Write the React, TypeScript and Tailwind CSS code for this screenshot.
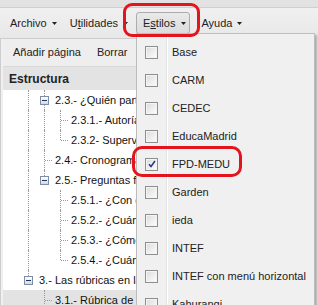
import React from 'react'

type Node = {
  text: string
  level: number
  expander?: boolean
  anc: boolean[]
  last?: boolean
  selected?: boolean
}

const tree: Node[] = [
  { text: '2.3.- ¿Quién participa?', level: 1, expander: true, anc: [true] },
  { text: '2.3.1.- Autoría', level: 2, anc: [true, true] },
  { text: '2.3.2- Supervisión', level: 2, anc: [true, true], last: true },
  { text: '2.4.- Cronograma', level: 1, anc: [true] },
  { text: '2.5.- Preguntas frecuentes', level: 1, expander: true, anc: [true], last: true },
  { text: '2.5.1.- ¿Con qué?', level: 2, anc: [true, false] },
  { text: '2.5.2.- ¿Cuánto?', level: 2, anc: [true, false] },
  { text: '2.5.3.- ¿Cómo?', level: 2, anc: [true, false] },
  { text: '2.5.4.- ¿Cuándo?', level: 2, anc: [true, false], last: true },
  { text: '3.- Las rúbricas en la evaluación', level: 0, expander: true, anc: [], last: true },
  { text: '3.1.- Rúbrica de evaluación', level: 1, anc: [false], selected: true },
]

const styles = ['Base', 'CARM', 'CEDEC', 'EducaMadrid', 'FPD-MEDU', 'Garden', 'ieda', 'INTEF', 'INTEF con menú horizontal', 'Kahurangi']

function Caret() {
  return (
    <svg width="5" height="3" viewBox="0 0 5 3" className="shrink-0">
      <path d="M0 0h5L2.5 3z" fill="#222" />
    </svg>
  )
}

function VLine({ half }: { half?: boolean }) {
  return <div className={`absolute left-[8px] top-0 border-l border-dotted border-[#9a9a9a] ${half ? 'h-[10px]' : 'bottom-0'}`} />
}

function TreeRow({ n }: { n: Node }) {
  return (
    <div className={`flex h-[20px] items-center pl-[17px] ${n.selected ? 'bg-[#e3e3e3]' : ''}`}>
      {n.anc.map((a, i) => (
        <div key={i} className="relative h-[20px] w-[16px] shrink-0">
          {a && <VLine />}
        </div>
      ))}
      <div className="relative h-[20px] w-[16px] shrink-0">
        {n.expander ? (
          <>
            <div className="absolute left-[8px] top-0 h-[6px] border-l border-dotted border-[#9a9a9a]" />
            {!n.last && <div className="absolute left-[8px] top-[14px] bottom-0 border-l border-dotted border-[#9a9a9a]" />}
            <div className="absolute left-[4px] top-[6px] flex h-[9px] w-[9px] items-center justify-center border border-[#7d8ea6] bg-gradient-to-b from-white to-[#d3d9e2]">
              <div className="h-[1px] w-[5px] bg-[#233553]" />
            </div>
          </>
        ) : (
          <>
            <VLine half={n.last} />
            <div className="absolute left-[9px] top-[10px] w-[7px] border-t border-dotted border-[#9a9a9a]" />
          </>
        )}
      </div>
      <span className="ml-[3px] whitespace-nowrap text-[#111]">{n.text}</span>
    </div>
  )
}

function Check({ checked }: { checked?: boolean }) {
  return (
    <div className="flex h-[13px] w-[13px] items-center justify-center border border-[#8e8f8f] bg-gradient-to-br from-[#d6d6d6] to-white">
      <div className="flex h-[11px] w-[11px] items-center justify-center border border-[#f4f4f4] bg-gradient-to-br from-[#dedede] to-[#fbfbfb]">
        {checked && (
          <svg width="8" height="8" viewBox="0 0 8 8">
            <path d="M1 4.2l2 2.3L7 1" fill="none" stroke="#243a8c" strokeWidth="1.5" />
          </svg>
        )}
      </div>
    </div>
  )
}

export default function App() {
  return (
    <div className="relative h-[305px] w-[318px] overflow-hidden bg-[#e6e6e6] font-['Liberation_Sans',Arial,sans-serif] text-[11px] text-[#222]">
      <div className="h-[8px] border-b border-[#cfcfcf] bg-[#e2e2e2]" />
      <div className="flex h-[30px] items-center bg-gradient-to-b from-[#f0f0f0] to-[#e8e8e8]">
        <div className="ml-[10px] flex items-center gap-[5px]">
          <span>Archivo</span>
          <Caret />
        </div>
        <div className="ml-[13px] flex items-center gap-[5px]">
          <span>
            U<span className="underline">t</span>ilidades
          </span>
          <Caret />
        </div>
        <div className="ml-[8px] flex h-[22px] items-center gap-[6px] rounded-[3px] border border-[#acacac] bg-gradient-to-b from-[#e9e9e9] to-[#dcdcdc] pl-[6px] pr-[3px]">
          <span>
            E<span className="underline">s</span>tilos
          </span>
          <Caret />
        </div>
        <div className="ml-[11px] flex items-center gap-[5px]">
          <span>Ayuda</span>
          <Caret />
        </div>
      </div>

      <div className="w-[140px] border-l border-t border-[#cdcdcd] bg-[#f0f0f0] pl-[2px]">
        <div className="flex h-[27px] items-center gap-[16px] bg-[#eeeeee] pl-[10px] text-[#222]">
          <span>Añadir página</span>
          <span>Borrar</span>
        </div>
        <div className="flex h-[24px] items-center border-t border-[#d9d9d9] bg-[#e3e3e3] pl-[6px] text-[12px] font-bold text-[#222]">
          Estructura
        </div>
        <div className="h-[240px] bg-white">
          {tree.map((n) => (
            <TreeRow key={n.text} n={n} />
          ))}
        </div>
      </div>

      {/* dropdown menu */}
      <div className="absolute left-[136px] top-[33px] flex h-[290px] w-[179px] border border-[#bdbdbd] bg-[#f0f0f0] shadow-[2px_2px_2px_rgba(0,0,0,0.25)]">
        <div className="w-[30px] shrink-0 border-r border-[#e2e3e3] pt-[4px]">
          {styles.map((s) => (
            <div key={s} className="flex h-[28px] items-center pl-[8px]">
              <Check checked={s === 'FPD-MEDU'} />
            </div>
          ))}
        </div>
        <div className="border-l border-white pl-[4px] pt-[4px]">
          {styles.map((s) => (
            <div key={s} className="flex h-[28px] items-center whitespace-nowrap text-[#222]">
              {s}
            </div>
          ))}
        </div>
      </div>

      {/* red highlights */}
      <div className="absolute left-[123px] top-[3px] h-[34px] w-[77px] rounded-[9px] border-[3px] border-[#e3141c]" />
      <div className="absolute left-[132px] top-[146px] h-[31px] w-[110px] rounded-[10px] border-[3px] border-[#e3141c]" />
    </div>
  )
}
